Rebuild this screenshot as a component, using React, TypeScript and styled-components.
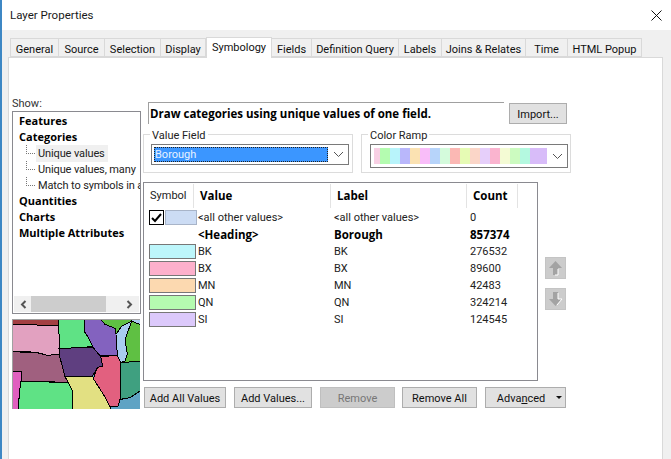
import React from 'react';
import styled, { createGlobalStyle } from 'styled-components';

const Global = createGlobalStyle`
  html, body { margin: 0; padding: 0; background: #fff; }
  body { font-family: Roboto, Lato, sans-serif; font-size: 11px; color: #111; overflow: hidden; }
`;
const Bold = `font-family: "Open Sans", Roboto, sans-serif; font-weight: 700; font-size: 11.5px; color: #000;`;
const Win = styled.div`
  width: 671px; height: 459px; display: flex; flex-direction: column; overflow: hidden;
  border-left: 2px solid #3d87c4; box-sizing: border-box; background: #fff;
`;
const TitleBar = styled.div`
  height: 30px; flex: none; display: flex; align-items: center; justify-content: space-between;
  padding: 0 9px 0 8px; font-size: 11.5px; color: #1a1a1a;
`;
const Body = styled.div`
  flex: 1; background: #f0f0f0; padding: 9px 8px 0 6px; display: flex; flex-direction: column; min-height: 0;
`;
const Tabs = styled.div`
  display: flex; height: 18px; padding-left: 2px; align-items: flex-end; position: relative; z-index: 1;
`;
const Tab = styled.div<{ $active?: boolean; $w: number }>`
  width: ${p => p.$w}px; box-sizing: border-box; text-align: center; white-space: nowrap;
  height: ${p => (p.$active ? 21 : 19)}px; line-height: ${p => (p.$active ? 20 : 21)}px;
  margin-bottom: ${p => (p.$active ? -1 : 0)}px; margin-top: ${p => (p.$active ? -2 : 0)}px;
  background: ${p => (p.$active ? '#fff' : '#f0f0f0')};
  border: 1px solid #d9d9d9; border-bottom: ${p => (p.$active ? 'none' : '1px solid #d9d9d9')};
  border-left: ${p => (p.$active ? '1px solid #d9d9d9' : 'none')};
  &:first-child { border-left: 1px solid #d9d9d9; }
`;
const Panel = styled.div`
  flex: 1; background: #fff; border: 1px solid #d9d9d9; border-bottom: none; min-height: 0;
  display: grid; grid-template-columns: 129px 1fr; column-gap: 2px; padding: 37px 0 0 3px; box-sizing: border-box;
  align-content: start;
`;
const Left = styled.div` display: flex; flex-direction: column; `;
const ShowLabel = styled.div` height: 16px; line-height: 17px; color: #333; `;
const Tree = styled.div`
  height: 203px; box-sizing: border-box; border: 1px solid #8a8a90;
  display: flex; flex-direction: column; position: relative; overflow: hidden;
`;
const TreeList = styled.div` flex: 1; padding-top: 1px; `;
const TreeHead = styled.div`
  ${Bold} font-size: 11px; height: 16px; line-height: 16px; padding-left: 6px; white-space: nowrap;
`;
const TreeKid = styled.div`
  height: 16px; line-height: 17px; margin-left: 13px; padding-left: 12px; white-space: nowrap; position: relative; color: #222; letter-spacing: -0.12px;
  &::before { content: ''; position: absolute; left: 0; top: 8px; width: 9px; border-top: 1px dotted #777; }
  &::after { content: ''; position: absolute; left: 0; top: 0; height: 9px; border-left: 1px dotted #777; }
`;
const SelText = styled.span` background: #f0f0f0; margin-left: -2px; display: inline-block; width: 72px; padding-left: 2px; box-sizing: border-box; `;
const HScroll = styled.div`
  height: 16px; margin: 0 1px 1px 1px; background: #f0f0f0; display: flex; align-items: center; justify-content: space-between; padding: 0 6px; position: relative; flex: none;
`;
const Thumb = styled.div` position: absolute; left: 17px; width: 75px; top: 0; bottom: 0; background: #cdcdcd; `;
const MapBox = styled.div`
  margin-top: 5px; width: 128px; height: 90px; box-sizing: border-box; border: 1px solid #a0a0a0; border-right: none; border-bottom: none; overflow: hidden;
  svg { display: block; }
`;
const Right = styled.div` display: flex; flex-direction: column; padding-top: 7px; `;
const DescRow = styled.div` display: flex; padding-left: 5px; height: 22px; `;
const Desc = styled.div`
  ${Bold} width: 356px; box-sizing: border-box; border-top: 1px solid #a0a0a0; border-left: 1px solid #a0a0a0;
  line-height: 21px; white-space: nowrap; padding-left: 1px;
`;
const Btn = styled.div<{ $w: number; $off?: boolean }>`
  width: ${p => p.$w}px; height: 21px; box-sizing: border-box; text-align: center; line-height: 21px; white-space: nowrap;
  background: ${p => (p.$off ? '#cccccc' : '#e1e1e1')}; border: 1px solid ${p => (p.$off ? '#bfbfbf' : '#adadad')};
  color: ${p => (p.$off ? '#777' : '#111')}; flex: none; position: relative;
`;
const ImportBtn = styled(Btn)` margin: 1px 0 0 5px; `;
const Groups = styled.div` display: flex; gap: 8px; margin-top: 10px; height: 39px; `;
const Group = styled.div<{ $pad: number }>`
  width: 210px; box-sizing: border-box; border: 1px solid #dcdcdc; position: relative; padding: 9px 2px 0 ${p => p.$pad}px;
`;
const Legend = styled.span`
  position: absolute; top: -7px; left: 6px; background: #fff; padding: 0 2px; line-height: 15px; color: #222;
`;
const Combo = styled.div<{ $h: number }>`
  height: ${p => p.$h}px; width: 198px; box-sizing: border-box; border: 1px solid #7a7a7a; padding: 2px 0 2px 2px; display: flex; align-items: stretch;
`;
const ComboVal = styled.div`
  flex: 1; background: #3b96ff; color: #e8f2ff; outline: 1px dotted #222; outline-offset: -1px; line-height: 15px; padding-left: 1px;
`;
const Chevron = styled.div` width: 20px; flex: none; display: flex; align-items: center; justify-content: center; `;
const Ramp = styled.div` flex: 1; display: flex; margin: 1px 0 1px 1px; `;
const RampCell = styled.div<{ $c: string; $w: number }>` width: ${p => p.$w}px; background: ${p => p.$c}; flex: none; `;
const TableRow = styled.div` display: flex; margin-top: 9px; `;
const Table = styled.div`
  width: 395px; height: 199px; box-sizing: border-box; border: 1px solid #8a8a90;
`;
const Header = styled.div`
  display: grid; grid-template-columns: 50px 137px 136px 51px; height: 24px; margin-top: 1px; align-items: stretch;
`;
const HCell = styled.div<{ $bold?: boolean }>`
  border-right: 1px solid #e3e3e3; line-height: 24px; padding-left: 6px; color: #222;
  ${p => (p.$bold ? Bold : '')}
`;
const Row = styled.div<{ $bold?: boolean }>`
  display: grid; grid-template-columns: 54px 136px 136px 1fr; height: 17px; line-height: 19px; white-space: nowrap; color: #222;
  ${p => (p.$bold ? Bold : '')}
`;
const SymCell = styled.div` display: flex; gap: 1px; padding: 0 0 0 5px; align-items: center; `;
const Check = styled.div`
  width: 15px; height: 15px; box-sizing: border-box; border: 1px solid #000; display: flex; align-items: center; justify-content: center; background: #fff; flex: none;
`;
const Swatch = styled.div<{ $c: string; $w: number }>`
  width: ${p => p.$w}px; height: 15px; box-sizing: border-box; background: ${p => p.$c}; border: 1px solid ${p => (p.$w < 40 ? '#a8b4c8' : '#777')}; flex: none;
`;
const Side = styled.div` display: flex; flex-direction: column; gap: 9px; margin: 75px 0 0 7px; `;
const ArrowBtn = styled.div`
  width: 21px; height: 22px; box-sizing: border-box; background: #cccccc; border: 1px solid #c4c4c4; display: flex; align-items: center; justify-content: center;
`;
const Buttons = styled.div` display: flex; margin: 6px 0 0 1px; `;
const Btm = styled(Btn)<{ $ml: number }>` margin-left: ${p => p.$ml}px; `;
const AdvWrap = styled.span` display: inline-block; margin-right: 9px; `;
const Caret = styled.span`
  position: absolute; right: 3px; top: 8px; width: 0; height: 0; border-left: 3px solid transparent; border-right: 3px solid transparent; border-top: 3px solid #111;
`;
const Und = styled.span` text-decoration: underline; `;

const Chev = () => (
  <svg width="11" height="7" viewBox="0 0 11 7"><path d="M1 1l4.5 4.5L10 1" fill="none" stroke="#555" strokeWidth="1" /></svg>
);
const tabs: [string, number][] = [['General', 49], ['Source', 46], ['Selection', 56], ['Display', 45]];
const tabs2: [string, number][] = [['Fields', 40], ['Definition Query', 87], ['Labels', 43], ['Joins & Relates', 84], ['Time', 42], ['HTML Popup', 74]];
const ramp: [string, number][] = [['#f8d0e4', 6], ['#b4fcb0', 10], ['#b8f4fb', 10], ['#b9b7fb', 10], ['#fbe2b2', 10], ['#f9bdf9', 10], ['#b7d4fa', 10], ['#d4fbdc', 10], ['#fbb8b4', 10], ['#e6fbb4', 10], ['#fbd6c8', 10], ['#e6cffa', 10], ['#fab4cf', 10], ['#f4fbd4', 10], ['#ccfbc0', 10], ['#b4f9e0', 10], ['#d8bcf9', 17]];
const rows: [string, string, string][] = [['BK', '#bdf6fb', '276532'], ['BX', '#fdb0cc', '89600'], ['MN', '#fcd9b0', '42483'], ['QN', '#b5fbb0', '324214'], ['SI', '#dcc9fb', '124545']];

const regions: [string, string][] = [
  ['#a33f42', '5,5 145,5 145,28 78,28 78,25 5,25'],
  ['#e2a1c0', '5,26 78,27 145,29 145,45 150,65 147,98 148,115 112,118 80,109 5,105'],
  ['#5fe285', '145,5 225,5 222,45 235,65 248,92 200,95 147,98 150,65 145,45'],
  ['#5fc043', '268,5 365,5 365,15 335,30 318,55 315,37 285,25'],
  ['#8362bf', '225,5 268,5 285,25 315,37 318,55 322,118 272,120 255,105 248,92 235,65 222,45'],
  ['#a9cdf0', '365,5 395,5 395,28 372,18 365,15'],
  ['#5fc043', '358,35 365,15 372,18 395,28 395,135 332,140 345,135 352,115 345,70'],
  ['#a9cdf0', '318,55 335,30 365,15 358,35 345,70 352,115 345,135 330,140 322,118'],
  ['#5f3f80', '147,98 200,95 250,95 272,122 278,150 262,155 248,180 165,182 150,125'],
  ['#a0607f', '5,107 80,110 112,118 148,115 150,125 165,182 175,200 115,197 30,195 5,165'],
  ['#5fe285', '30,195 115,198 175,200 187,225 187,285 25,285 28,230 33,195'],
  ['#e05fbf', '5,165 33,167 33,195 28,230 25,285 5,285'],
  ['#e2e082', '165,182 248,180 250,188 283,240 300,272 300,285 187,285 187,225 175,200'],
  ['#3fa080', '332,140 395,135 395,222 360,245 332,250'],
  ['#e2607f', '272,122 322,118 332,140 332,240 325,270 300,272 283,240 250,188 262,155 278,150'],
];
const MapArt = () => (
  <svg width="127" height="89" viewBox="9 12 381 267" shapeRendering="crispEdges">
    <rect x="9" y="12" width="381" height="267" fill="#5fa3c4" />
    {regions.map(([c, p], i) => <polygon key={i} points={p} fill={c} stroke="#000" strokeWidth="3" />)}
  </svg>
);

export default function App() {
  return (
    <Win>
      <Global />
      <TitleBar>
        <span>Layer Properties</span>
        <svg width="11" height="11" viewBox="0 0 11 11"><path d="M.5.5l10 10M10.5.5l-10 10" stroke="#111" fill="none" /></svg>
      </TitleBar>
      <Body>
        <Tabs>
          {tabs.map(([t, w]) => <Tab key={t} $w={w}>{t}</Tab>)}
          <Tab $active $w={66}>Symbology</Tab>
          {tabs2.map(([t, w]) => <Tab key={t} $w={w}>{t}</Tab>)}
        </Tabs>
        <Panel>
          <Left>
            <ShowLabel>Show:</ShowLabel>
            <Tree>
              <TreeList>
                <TreeHead>Features</TreeHead>
                <TreeHead>Categories</TreeHead>
                <TreeKid><SelText>Unique values</SelText></TreeKid>
                <TreeKid>Unique values, many</TreeKid>
                <TreeKid>Match to symbols in a</TreeKid>
                <TreeHead>Quantities</TreeHead>
                <TreeHead>Charts</TreeHead>
                <TreeHead>Multiple Attributes</TreeHead>
              </TreeList>
              <HScroll>
                <Thumb />
                <svg width="7" height="9" viewBox="0 0 7 9"><path d="M5.5 1L2 4.5 5.5 8" fill="none" stroke="#555" strokeWidth="2" /></svg>
                <svg width="7" height="9" viewBox="0 0 7 9"><path d="M1.5 1L5 4.5 1.5 8" fill="none" stroke="#555" strokeWidth="2" /></svg>
              </HScroll>
            </Tree>
            <MapBox><MapArt /></MapBox>
          </Left>
          <Right>
            <DescRow>
              <Desc>Draw categories using unique values of one field.</Desc>
              <ImportBtn $w={58}>Import...</ImportBtn>
            </DescRow>
            <Groups>
              <Group $pad={7}>
                <Legend>Value Field</Legend>
                <Combo $h={21}>
                  <ComboVal>Borough</ComboVal>
                  <Chevron><Chev /></Chevron>
                </Combo>
              </Group>
              <Group $pad={8}>
                <Legend>Color Ramp</Legend>
                <Combo $h={24}>
                  <Ramp>{ramp.map(([c, w], i) => <RampCell key={i} $c={c} $w={w} />)}</Ramp>
                  <Chevron><Chev /></Chevron>
                </Combo>
              </Group>
            </Groups>
            <TableRow>
              <Table>
                <Header>
                  <HCell>Symbol</HCell>
                  <HCell $bold>Value</HCell>
                  <HCell $bold>Label</HCell>
                  <HCell $bold>Count</HCell>
                </Header>
                <Row>
                  <SymCell><Check><svg width="11" height="10" viewBox="0 0 11 10"><path d="M1 5l3 3 6-7" fill="none" stroke="#000" strokeWidth="2" /></svg></Check><Swatch $c="#ccdcf4" $w={32} /></SymCell>
                  <span>&lt;all other values&gt;</span><span>&lt;all other values&gt;</span><span>0</span>
                </Row>
                <Row $bold>
                  <span />
                  <span>&lt;Heading&gt;</span><span>Borough</span><span>857374</span>
                </Row>
                {rows.map(([k, c, n]) => (
                  <Row key={k}>
                    <SymCell><Swatch $c={c} $w={47} /></SymCell>
                    <span>{k}</span><span>{k}</span><span>{n}</span>
                  </Row>
                ))}
              </Table>
              <Side>
                <ArrowBtn><svg width="15" height="16" viewBox="0 0 15 16"><path d="M7.5 1L14 8h-4v7H5V8H1z" fill="#a3a3a3" /><path d="M10 9v6H7" fill="none" stroke="#fff" /></svg></ArrowBtn>
                <ArrowBtn><svg width="15" height="16" viewBox="0 0 15 16"><path d="M7.5 15L14 8h-4V1H5v7H1z" fill="#a3a3a3" /><path d="M10 2v6h4l-5 6" fill="none" stroke="#fff" /></svg></ArrowBtn>
              </Side>
            </TableRow>
            <Buttons>
              <Btm $ml={0} $w={82}>Add All Values</Btm>
              <Btm $ml={8} $w={78}>Add Values...</Btm>
              <Btm $ml={8} $w={75} $off>Remove</Btm>
              <Btm $ml={7} $w={75}>Remove All</Btm>
              <Btm $ml={8} $w={81}><AdvWrap>Adva<Und>n</Und>ced</AdvWrap><Caret /></Btm>
            </Buttons>
          </Right>
        </Panel>
      </Body>
    </Win>
  );
}
